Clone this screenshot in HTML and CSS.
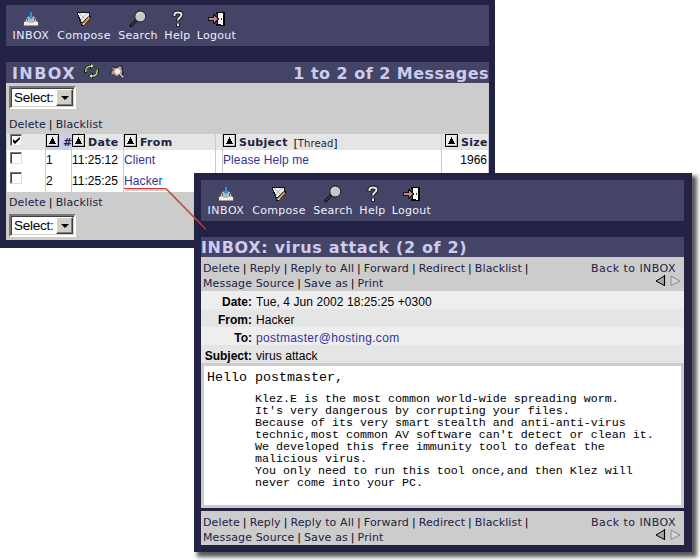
FILE: index.html
```html
<!DOCTYPE html>
<html lang="en">
<head>
<meta charset="utf-8">
<title>INBOX</title>
<link rel="stylesheet" href="styles.css">
</head>
<body>
<svg class="defs" aria-hidden="true">
  <symbol id="i-inbox" viewBox="0 0 16 16">
    <path d="M3 6h10v1h1v2h1v2h1v4H0v-4h1V9h1V7h1z" fill="#55565c"/>
    <path d="M4 6h8v2h1v2h1v2H2v-2h1V8h1z" fill="#b8bbb9"/>
    <path d="M1 11h4l1 1h4l1-1h4v3H1z" fill="#eeeeec"/>
    <path d="M1 14h14v1H1z" fill="#999"/>
    <path d="M4 7h1v3H4zM11 7h1v3h-1z" fill="#666"/>
    <path d="M7 1h2v4h2v1h-1v1H9v1H7V7H6V6H5V5h2z" fill="#2e91d1"/>
  </symbol>
  <symbol id="i-compose" viewBox="0 0 16 16">
    <path d="M1 1h13v4h1v2h-1v1h-1v1h-1v2h-1v1h-1v1H9v1H8v1H5v-2h1v-1H4v-2H3V7H2V4H1z" fill="#111"/>
    <path d="M2 2h11v4L8 11H5V8H4V6H3V4H2z" fill="#eee"/>
    <path d="M3 2l4 4 5-4M5 9l2-3 2 2" fill="none" stroke="#aaa" stroke-width=".8"/>
    <path d="M13.500 6.500L8 12" stroke="#111" stroke-width="3.400"/>
    <path d="M13.500 6.500L8 12.500" stroke="#ee9b3c" stroke-width="2"/>
    <path d="M6.500 12h2v2h-2z" fill="#f1dbb6"/>
  </symbol>
  <symbol id="i-search" viewBox="0 0 18 17">
    <path d="M7 10L1 16" stroke="#090909" stroke-width="3"/>
    <path d="M6.5 10.5L2 15" stroke="#777"/>
    <circle cx="11.3" cy="6" r="5.5" fill="#c6c6c4" stroke="#161616"/>
    <path d="M8 5c1-2 2-3 4-3" stroke="#ececec" fill="none"/>
  </symbol>
  <symbol id="i-help" viewBox="0 0 12 17">
    <path d="M2.500 6V4c0-3 7-3 7 0 0 3-3.500 3-3.500 6.500M6 13v3" fill="none" stroke="#0a0a0a" stroke-width="3.600"/>
    <path d="M2.500 5.500V4c0-2.600 7-2.600 7 0 0 3-3.500 3-3.500 6M6 13v2.500" fill="none" stroke="#e8e8e6" stroke-width="2"/>
  </symbol>
  <symbol id="i-logout" viewBox="0 0 17 16">
    <path d="M8 1h9v14H8v-2h1V3H8z" fill="#050505"/>
    <path d="M10 2h5v12h-2v-1h-3z" fill="#f6f6f4"/>
    <path d="M13 7h1v2h-1z" fill="#444"/>
    <path d="M0 6h5V3h2v1h1v1h1v1h1v1h1v2h-1v1H9v1H8v1H7v1H5v-3H0z" fill="#111"/>
    <path d="M1 7h5V4.500L9.800 8 6 11.500V9H1z" fill="#c48a87"/>
  </symbol>
  <symbol id="i-refresh" viewBox="0 0 15 16">
    <path d="M2 10C0 6 3 3 8 3M13 6c2 4-1 7-6 7" fill="none" stroke="#10101c" stroke-width="2.600"/>
    <path d="M6 0l5 3-5 3.500zM9 9.500L4 13l5 3z" fill="#10101c"/>
    <path d="M1.800 9C1 5 4 3 8 3M13 6.500c1 4-1 6.500-5 6.500" fill="none" stroke="#b4ea68" stroke-width="1.500"/>
    <path d="M7 1l3 2-3 2zM8 11l-3 2 3 2z" fill="#c2f277"/>
  </symbol>
  <symbol id="i-filter" viewBox="0 0 15 14">
    <path d="M2 1l4 1 4-2 3 1v4l1 3-2 3H4L0 9l2-4z" fill="#2b2530"/>
    <path d="M2 2l4 2 4-3 2 2v6l-5 2-3-1-3-1 2-4z" fill="#d29a93"/>
    <path d="M3 4v2M3 9h2M11 3l1 2" stroke="#713f43"/>
    <circle cx="7.500" cy="6.500" r="3.300" fill="#ededee" stroke="#aaa"/>
    <path d="M10 9l4 4" stroke="#111" stroke-width="2.200"/>
    <path d="M10 9l3.500 3.500" stroke="#eee" stroke-width="1.200"/>
  </symbol>
  <symbol id="i-sort" viewBox="0 0 13 13">
    <path d="M0 0h13v13H0z" fill="#000"/><path d="M1 1h11v11H1z" fill="#eee"/><path d="M2 11h9V2h1v10H2z" fill="#bbb"/>
    <path d="M6 3h1v2h1v2h1v2h1v1H3V9h1V7h1V5h1z" fill="#000"/>
  </symbol>
  <symbol id="i-prev" viewBox="0 0 11 12">
    <path d="M9.500 1L1 6l8.500 4.500z" fill="#aaa" stroke="#000"/><path d="M9.500 0v11" stroke="#000" stroke-width="1.200"/>
  </symbol>
  <symbol id="i-next" viewBox="0 0 11 12">
    <path d="M1 1l9 5-9 4.500z" fill="#d6d6d6" stroke="#8a8a8a"/>
  </symbol>
</svg>

<main class="desktop">
  <section class="window list">
    <nav class="menu">
      <a><svg class="ic inbox"><use href="#i-inbox"/></svg><span class="wide">INBOX</span></a>
      <a><svg class="ic compose"><use href="#i-compose"/></svg><span>Compose</span></a>
      <a><svg class="ic search"><use href="#i-search"/></svg><span>Search</span></a>
      <a><svg class="ic help"><use href="#i-help"/></svg><span>Help</span></a>
      <a><svg class="ic logout"><use href="#i-logout"/></svg><span>Logout</span></a>
    </nav>
    <header class="title">
      <h1>INBOX</h1>
      <svg class="refresh"><use href="#i-refresh"/></svg>
      <svg class="filter"><use href="#i-filter"/></svg>
      <span class="count">1 to 2 of 2 Messages</span>
    </header>
    <div class="panel">
      <div class="select"><span>Select:</span><i></i></div>
      <div class="links top"><a>Delete</a><b>|</b><a>Blacklist</a></div>
      <div class="grid">
        <div class="row head">
          <span class="check"><i class="box"><svg viewBox="0 0 9 9"><path d="M1 3v3l2 2 5-5V1L3 5z"/></svg></i></span>
          <span class="num"><svg class="sort"><use href="#i-sort"/></svg><b>#</b></span>
          <span><svg class="sort"><use href="#i-sort"/></svg><b class="date">Date</b></span>
          <span><svg class="sort"><use href="#i-sort"/></svg><b>From</b></span>
          <span></span>
          <span><svg class="sort"><use href="#i-sort"/></svg><b>Subject</b><em>[<a>Thread</a>]</em></span>
          <span class="size"><svg class="sort"><use href="#i-sort"/></svg><b>Size</b></span>
        </div>
        <div class="row">
          <span class="check"><i class="box"></i></span><span class="id">1</span><span>11:25:12</span><span><a>Client</a></span><span></span><span><a>Please Help me</a></span><span class="size">1966</span>
        </div>
        <div class="row">
          <span class="check"><i class="box"></i></span><span class="id">2</span><span>11:25:25</span><span><a>Hacker</a></span><span></span><span></span><span></span>
        </div>
      </div>
      <div class="links bottom"><a>Delete</a><b>|</b><a>Blacklist</a></div>
      <div class="select"><span>Select:</span><i></i></div>
    </div>
  </section>

  <section class="window message">
    <nav class="menu">
      <a><svg class="ic inbox"><use href="#i-inbox"/></svg><span class="wide">INBOX</span></a>
      <a><svg class="ic compose"><use href="#i-compose"/></svg><span>Compose</span></a>
      <a><svg class="ic search"><use href="#i-search"/></svg><span>Search</span></a>
      <a><svg class="ic help"><use href="#i-help"/></svg><span>Help</span></a>
      <a><svg class="ic logout"><use href="#i-logout"/></svg><span>Logout</span></a>
    </nav>
    <header class="title"><h1>INBOX: virus attack (2 of 2)</h1></header>
    <div class="tools">
      <div>
        <div class="links"><a>Delete</a><b>|</b><a>Reply</a><b>|</b><a>Reply to All</a><b>|</b><a>Forward</a><b>|</b><a>Redirect</a><b>|</b><a>Blacklist</a><b>|</b></div>
        <div class="links"><a>Message Source</a><b>|</b><a>Save as</a><b>|</b><a>Print</a></div>
      </div>
      <div class="back"><a>Back to INBOX</a><div><svg><use href="#i-prev"/></svg><svg><use href="#i-next"/></svg></div></div>
    </div>
    <dl class="fields">
      <div><dt>Date:</dt><dd>Tue, 4 Jun 2002 18:25:25 +0300</dd></div>
      <div><dt>From:</dt><dd>Hacker</dd></div>
      <div><dt>To:</dt><dd><a>postmaster@hosting.com</a></dd></div>
      <div><dt>Subject:</dt><dd>virus attack</dd></div>
    </dl>
    <article class="body">
      <p>Hello postmaster,</p>
      <pre>Klez.E is the most common world-wide spreading worm.
It's very dangerous by corrupting your files.
Because of its very smart stealth and anti-anti-virus
technic,most common AV software can't detect or clean it.
We developed this free immunity tool to defeat the
malicious virus.
You only need to run this tool once,and then Klez will
never come into your PC.</pre>
    </article>
    <div class="tools foot">
      <div>
        <div class="links"><a>Delete</a><b>|</b><a>Reply</a><b>|</b><a>Reply to All</a><b>|</b><a>Forward</a><b>|</b><a>Redirect</a><b>|</b><a>Blacklist</a><b>|</b></div>
        <div class="links"><a>Message Source</a><b>|</b><a>Save as</a><b>|</b><a>Print</a></div>
      </div>
      <div class="back"><a>Back to INBOX</a><div><svg><use href="#i-prev"/></svg><svg><use href="#i-next"/></svg></div></div>
    </div>
  </section>

  <svg class="pointer" viewBox="0 0 90 50"><path class="shade" d="M1 5h42l34 34"/><path d="M0 3.500h42l40 41"/></svg>
</main>
</body>
</html>
```
FILE: styles.css
```css
* { box-sizing: border-box; }
body { margin: 0; background: #fff; font: 12px/18px "Liberation Sans", sans-serif; color: #000; }
.defs { position: absolute; width: 0; height: 0; }
.desktop { position: relative; width: 700px; height: 560px; overflow: hidden; }
.window { position: absolute; background: #222244; }
.list { left: 0; top: 0; width: 495px; height: 248px; padding: 5px 6px 8px; }
.message { left: 194px; top: 173px; width: 498px; height: 379px; padding: 7px 8px 7px 7px; box-shadow: 4px 4px 4px 1px rgba(0, 0, 0, .65); }

.menu { display: grid; grid-template-columns: 38px 54px 40px 25px 39px; column-gap: 7px; height: 41px; padding: 5px 6px 0; background: #444466; color: #eeeeff; font: 11px/14px "DejaVu Sans", sans-serif; }
.menu a { display: flex; flex-direction: column; align-items: center; white-space: nowrap; }
.menu span { letter-spacing: .3px; line-height: 15px; }
.menu .wide { letter-spacing: .5px; }
.ic { width: 16px; height: 18px; padding: 1px 0; }
.ic.search { width: 18px; height: 18px; padding: 0; }
.ic.help { width: 12px; height: 18px; padding: 0; }
.ic.logout { width: 17px; }

.title { display: flex; height: 21px; margin-top: 16px; padding-left: 6px; background: #444466; color: #ccccee; font: bold 16px/23px "DejaVu Sans", sans-serif; white-space: nowrap; }
.title h1 { margin: 0; font: inherit; letter-spacing: 1.4px; }
.refresh { width: 15px; height: 16px; margin: 1px 0 0 8px; }
.filter { width: 15px; height: 14px; margin: 3px 0 0 11px; }
.count { margin-left: auto; letter-spacing: .47px; }
.message .title { height: 20px; padding-left: 0; line-height: 22px; }
.message .title h1 { letter-spacing: .66px; }

.panel { height: 157px; background: #ccc; padding-top: 3px; }
.select { display: flex; width: 67px; height: 23px; margin-left: 3px; background: #fff; border: 2px solid; border-color: #777 #fff #fff #777; box-shadow: inset 1px 1px #404040, inset -1px -1px #d4d0c8; font-size: 13.5px; line-height: 20px; }
.select span { width: 45px; padding-left: 3px; white-space: nowrap; letter-spacing: -.25px; }
.select i { display: flex; align-items: center; justify-content: center; width: 17px; height: 17px; margin-top: 1px; background: #d4d0c8; border: 1px solid; border-color: #fff #404040 #404040 #fff; box-shadow: inset -1px -1px #808080; }
.select i::before { content: ""; border: 4px solid transparent; border-top-color: #000; border-bottom: 0; }

.links { display: flex; font: 11px/15px "DejaVu Sans", sans-serif; color: #222244; letter-spacing: .13px; white-space: nowrap; }
.links b { width: 9.7px; text-align: center; font-weight: normal; color: #000; }
.links.top { margin: 8px 0 1px 3px; height: 16px; line-height: 16px; }
.links.bottom { margin: 6px 0 3px 3px; height: 16px; }

.grid { display: grid; gap: 1px; margin: 0 1px; background: #ccc; }
.row { display: grid; grid-template-columns: 38px 25px 51px 91px 6px 218px 46px; gap: 1px; height: 19px; line-height: 21px; }
.row > span { background: #fff; white-space: nowrap; padding-left: 0; }
.row a { color: #333399; letter-spacing: .1px; }
.row .size { text-align: right; padding-right: 1px; }
.row:last-child { line-height: 22px; }
.head { height: 15px; color: #222244; }
.head > span { display: flex; background: #e5e5e5; padding-left: 0; }
.head b { font: bold 11px/18px "DejaVu Sans", sans-serif; letter-spacing: .3px; margin-left: 3px; }
.head em { font: 10px/19px "DejaVu Sans", sans-serif; margin-left: 6px; color: #000; letter-spacing: .2px; }
.head em a { color: #222244; }
.head .num { background: #ccccee; }
.head .size { padding: 0; }
.row .num b { margin-left: 4px; }
.head .size .sort { margin-left: 3px; }
.sort { width: 13px; height: 13px; flex: none; }
.row .check { padding-left: 3px; }
.box { display: block; width: 12px; height: 12px; margin-top: 2px; background: #fff; border: 1px solid; border-color: #777 #ddd #ddd #777; box-shadow: inset 1px 1px #444; }
.head .box { margin-top: 0; }
.box svg { display: block; width: 9px; height: 9px; margin: 1px; }

.tools { display: flex; justify-content: space-between; height: 34px; padding: 4px 0 0 2px; background: #ccc; }
.back { padding-right: 8px; font: 11px/15px "DejaVu Sans", sans-serif; color: #222244; letter-spacing: .45px; }
.back div { display: flex; justify-content: flex-end; gap: 4px; margin: -1px -5px 0 0; }
.back svg { width: 11px; height: 12px; }
.fields { margin: 0; }
.fields div { display: flex; height: 18px; line-height: 22px; background: #eee; }
.fields div:nth-child(even) { background: #e5e5e5; }
.fields dt { width: 51px; text-align: right; font-weight: bold; }
.fields dd { margin: 0 0 0 4px; white-space: nowrap; letter-spacing: .08px; }
.fields a { color: #333399; letter-spacing: .33px; }
.body { height: 145px; background: #fff; border: 3px solid #ccc; padding: 3px 3px; }
.body p { margin: 0; font: 13.33px/17px "Liberation Mono", monospace; }
.body pre { margin: 7px 0 0 48px; font: 11.67px/12px "Liberation Mono", monospace; }
.tools.foot { margin-top: 3px; }
.pointer { position: absolute; left: 124px; top: 185px; width: 90px; height: 50px; fill: none; stroke: #dd3333; stroke-width: 1.2; }
.pointer .shade { stroke: #777; opacity: .35; stroke-width: 2; }
```
